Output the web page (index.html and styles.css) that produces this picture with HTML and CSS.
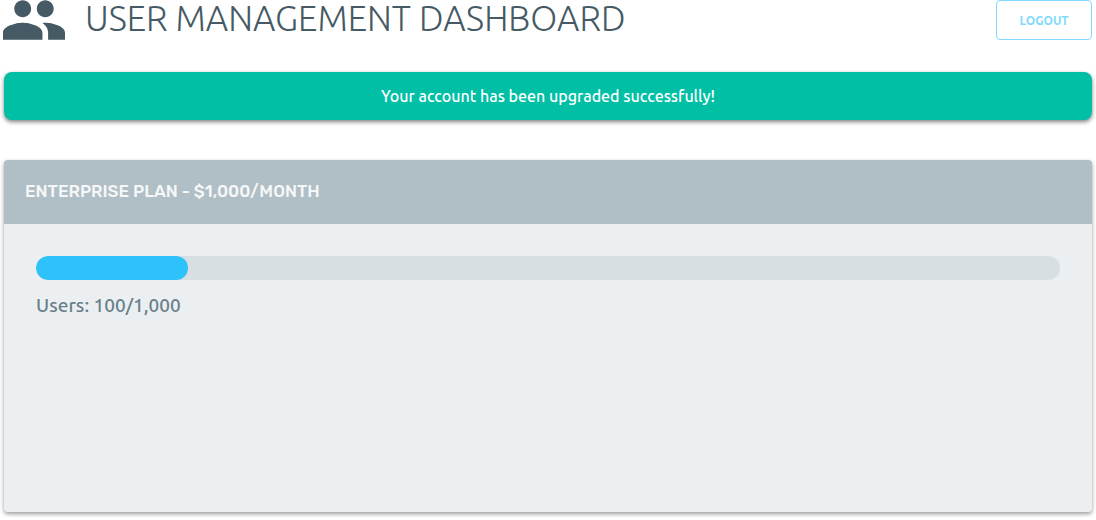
FILE: index.html
```html
<!DOCTYPE html>
<html lang="en">
<head>
<meta charset="utf-8">
<meta name="viewport" content="width=device-width, initial-scale=1">
<title>User Management Dashboard</title>
<link rel="stylesheet" href="styles.css">
</head>
<body>
<header class="header">
  <svg class="header-icon" viewBox="1 5 22 14" aria-hidden="true"><path d="M16 11c1.66 0 2.99-1.34 2.99-3S17.66 5 16 5c-1.66 0-3 1.34-3 3s1.34 3 3 3zm-8 0c1.66 0 2.99-1.34 2.99-3S9.66 5 8 5C6.34 5 5 6.34 5 8s1.34 3 3 3zm0 2c-2.33 0-7 1.17-7 3.5V19h14v-2.500c0-2.330-4.670-3.500-7-3.500zm8 0c-.29 0-.62.02-.97.05 1.160.84 1.970 1.970 1.970 3.450V19h6v-2.500c0-2.330-4.670-3.500-7-3.500z"/></svg>
  <h1 class="title">USER MANAGEMENT DASHBOARD</h1>
  <button class="logout" type="button">LOGOUT</button>
</header>
<main class="main">
  <p class="alert" role="status">Your account has been upgraded successfully!</p>
  <section class="plan">
    <h2 class="plan-title">ENTERPRISE PLAN - $1,000/MONTH</h2>
    <div class="plan-body">
      <div class="meter" role="progressbar" aria-labelledby="users-label" aria-valuemin="0" aria-valuemax="1000" aria-valuenow="100">
        <div class="meter-fill" style="width: 14.84%"></div>
      </div>
      <p class="meter-label" id="users-label">Users: 100/1,000</p>
    </div>
  </section>
</main>
</body>
</html>
```
FILE: styles.css
```css
* {
  box-sizing: border-box;
}

body {
  margin: 0;
  padding: 0 4px 8px;
  min-height: 100vh;
  display: flex;
  flex-direction: column;
  gap: 32px;
  background: #fff;
  color: #455a64;
  font-family: Ubuntu, "Noto Sans", sans-serif;
}

h1, h2, p {
  margin: 0;
}

.header {
  display: flex;
  align-items: flex-start;
}

.header-icon {
  width: 62px;
  height: 40px;
  margin-left: -1px;
  flex: none;
  fill: #455a64;
}

.title {
  flex: 1;
  padding-left: 20px;
  font-family: Ubuntu, Lato, sans-serif;
  font-size: 35px;
  line-height: 36px;
  font-weight: 300;
}

.logout {
  width: 96px;
  height: 40px;
  padding: 0;
  border: 1px solid #81d9fb;
  border-radius: 4px;
  background: #fff;
  color: #81d9fb;
  font-family: inherit;
  font-size: 12px;
  font-weight: 600;
}

.main {
  flex: 1;
  display: flex;
  flex-direction: column;
  gap: 40px;
}

.alert {
  padding: 12px;
  border-radius: 8px;
  background: #00bfa5;
  box-shadow: 0 2px 4px rgba(0, 0, 0, 0.5);
  color: #fff;
  font-size: 16px;
  line-height: 24px;
  font-weight: 500;
  text-align: center;
}

.plan {
  flex: 1;
  overflow: hidden;
  border-radius: 4px;
  background: #ebeff2;
  box-shadow: 0 2px 4px rgba(0, 0, 0, 0.4);
}

.plan-title {
  padding: 19px 21px 21px;
  background: #b0bec5;
  color: #f5f7f8;
  font-family: Rubik, Inter, sans-serif;
  font-size: 17px;
  line-height: 24px;
  font-weight: 500;
}

.plan-body {
  padding: 32px;
}

.meter {
  overflow: hidden;
  height: 24px;
  border-radius: 12px;
  background: #d7dfe2;
}

.meter-fill {
  height: 100%;
  border-radius: 12px;
  background: #2dc3fa;
}

.meter-label {
  padding-top: 12px;
  color: #688089;
  font-size: 19px;
  line-height: 26px;
  font-weight: 500;
}
```
